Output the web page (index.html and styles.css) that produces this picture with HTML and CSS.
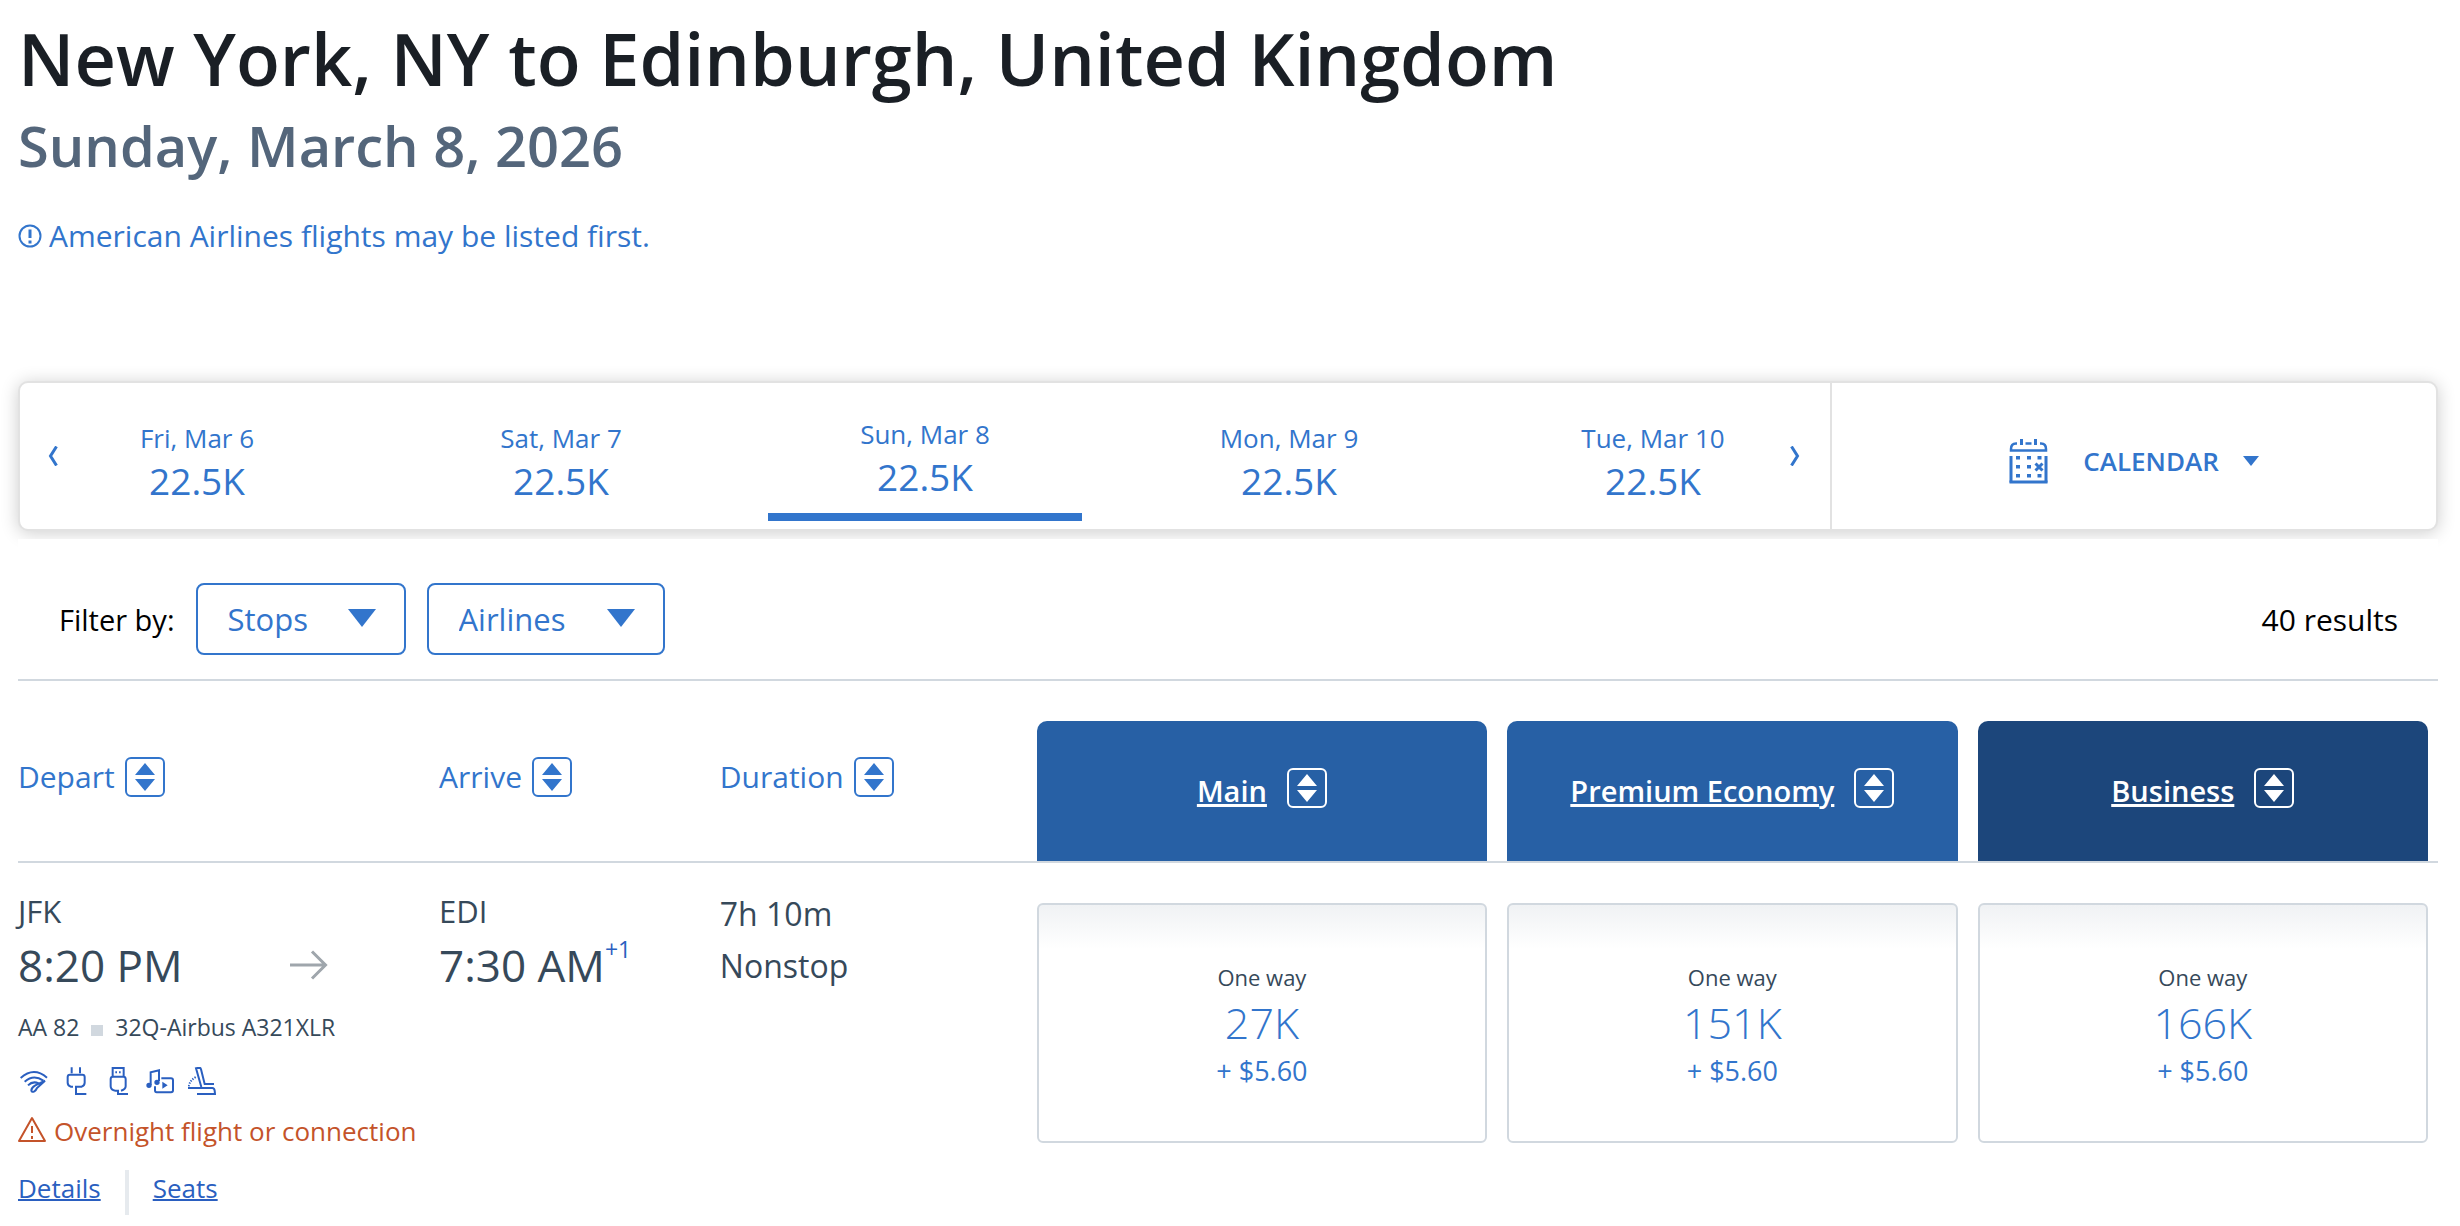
FILE: index.html
```html
<!DOCTYPE html>
<html lang="en">
<head>
    <meta charset="utf-8">
    <meta name="viewport" content="width=device-width, initial-scale=1">
    <title>Choose flights</title>
    <link rel="stylesheet" href="styles.css">
</head>
<body>
    <!-- shared icons -->
    <svg class="sprite" aria-hidden="true">
        <symbol id="icon-sort" viewBox="0 0 40 40">
            <rect x="1" y="1" width="38" height="38" rx="5" fill="none" stroke="currentColor" stroke-width="2"/>
            <path d="M20 6 30 18H10ZM20 34 30 22H10Z" fill="currentColor"/>
        </symbol>
    </svg>

    <header class="page-header">
        <h1>New York, NY to Edinburgh, United Kingdom</h1>
        <h2>Sunday, March 8, 2026</h2>
        <p class="notice">
            <svg width="24" height="24" viewBox="0 0 24 24" fill="none" stroke="currentColor" stroke-width="2" aria-hidden="true">
                <circle cx="12" cy="12" r="10.5"/>
                <path d="M12 5.500v8.500M12 16.500v3" stroke-width="3"/>
            </svg>
            American Airlines flights may be listed first.
        </p>
    </header>

    <nav class="date-bar" aria-label="Dates">
        <div class="days">
            <button class="arrow prev" aria-label="Previous dates">
                <svg width="10" height="20" viewBox="0 0 10 20" fill="none" stroke="currentColor" stroke-width="3"><path d="M8.500.5 2.500 10l6 9.500"/></svg>
            </button>
            <button class="day"><span class="date">Fri, Mar 6</span><span class="price">22.5K</span></button>
            <button class="day"><span class="date">Sat, Mar 7</span><span class="price">22.5K</span></button>
            <button class="day selected"><span class="date">Sun, Mar 8</span><span class="price">22.5K</span></button>
            <button class="day"><span class="date">Mon, Mar 9</span><span class="price">22.5K</span></button>
            <button class="day"><span class="date">Tue, Mar 10</span><span class="price">22.5K</span></button>
            <button class="arrow next" aria-label="Next dates">
                <svg width="10" height="20" viewBox="0 0 10 20" fill="none" stroke="currentColor" stroke-width="3"><path d="m1.500.5 6 9.500-6 9.500"/></svg>
            </button>
        </div>
        <button class="calendar">
            <svg width="40" height="46" viewBox="0 0 40 46" aria-hidden="true">
                <g fill="none" stroke="currentColor">
                    <path d="M8 5.500H7Q2 5.500 2 11v1.500h35V11q0-5.500-5-5.500h-1M16.500 5.500h6" stroke-width="2.500"/>
                    <path d="M12.500 1v6M26.500 1v6" stroke-width="3"/>
                    <path d="M2 18v26.500M37 18v26.500" stroke-width="3"/>
                    <path d="M.5 44h38" stroke-width="3"/>
                    <path d="m26.500 25.500 7 7M33.500 25.500l-7 7" stroke-width="3"/>
                </g>
                <path d="M7 18h4v3.500H7zM18 18h4v3.500h-4zM28.500 18h4v3.500h-4zM7 27h4v3.500H7zM18 27h4v3.500h-4zM7 36h4v3.500H7zM18 36h4v3.500h-4zM28.500 36h4v3.500h-4z" fill="currentColor"/>
            </svg>
            <span>CALENDAR</span>
            <svg class="caret" width="16" height="10" viewBox="0 0 16 10" aria-hidden="true"><path d="M0 0h16L8 10z" fill="currentColor"/></svg>
        </button>
    </nav>

    <section class="filters">
        <label for="stops">Filter by:</label>
        <div class="dropdown stops">
            <select id="stops"><option>Stops</option></select>
        </div>
        <div class="dropdown airlines">
            <select id="airlines" aria-label="Airlines"><option>Airlines</option></select>
        </div>
        <p class="count">40 results</p>
    </section>

    <table class="results">
        <colgroup>
            <col class="col-depart">
            <col class="col-arrive">
            <col>
            <col class="col-fare">
            <col class="col-fare">
            <col class="col-fare">
        </colgroup>
        <thead>
            <tr>
                <th><button class="sort">Depart <svg><use href="#icon-sort"/></svg></button></th>
                <th><button class="sort">Arrive <svg><use href="#icon-sort"/></svg></button></th>
                <th><button class="sort">Duration <svg><use href="#icon-sort"/></svg></button></th>
                <th class="fare"><div class="cabin"><a href="#">Main</a><button class="sort" aria-label="Sort by Main"><svg><use href="#icon-sort"/></svg></button></div></th>
                <th class="fare"><div class="cabin"><a href="#">Premium Economy</a><button class="sort" aria-label="Sort by Premium Economy"><svg><use href="#icon-sort"/></svg></button></div></th>
                <th class="fare"><div class="cabin business"><a href="#">Business</a><button class="sort" aria-label="Sort by Business"><svg><use href="#icon-sort"/></svg></button></div></th>
            </tr>
        </thead>
        <tbody>
            <tr>
                <td>
                    <div class="airport">JFK</div>
                    <div class="time-row">
                        <span class="time">8:20 PM</span>
                        <svg width="38" height="30" viewBox="0 0 38 30" fill="none" stroke="currentColor" stroke-width="3" aria-hidden="true"><path d="M0 15h35M22 1.500 35.500 15 22 28.500"/></svg>
                    </div>
                    <div class="flight">AA 82 <i></i> 32Q-Airbus A321XLR</div>
                    <div class="amenities">
                        <!-- wifi -->
                        <svg viewBox="60 50 84 84">
                            <path d="M62 83Q101 48 141 82M74 94q27-23 56-3M84 105q14-14 32-6"/>
                            <path d="M135 91 106 105q-12 7-12 15 1 7 9 3 5-3 8-10z"/>
                        </svg>
                        <!-- power outlet -->
                        <svg viewBox="186 50 84 84">
                            <path d="M215 51v18M240 51v18M219 109h-7q-9-4-9-12V80q0-7 7-7h37q7 0 7 7v17q0 8-9 12h-17v22h31"/>
                        </svg>
                        <!-- usb -->
                        <svg viewBox="312 50 84 84">
                            <path d="M338 78V53h33v25M346 66h5M357 66h5M363 121q14-4 14-13V86q0-7-7-7h-31q-7 0-7 7v22q0 12 14 13h8v10h30"/>
                        </svg>
                        <!-- entertainment -->
                        <svg viewBox="438 50 84 84">
                            <path d="M452 104V66l25-6v32M484 84h29q6 0 6 6v30q0 6-6 6h-43q-5 0-5-6v-12"/>
                            <path class="solid" d="M439 105a8 8 0 1 0 16 0 8 8 0 1 0-16 0M463 96a8 8 0 1 0 16 0 8 8 0 1 0-16 0M487 94v21l16-10z"/>
                        </svg>
                        <!-- lie flat seat -->
                        <svg viewBox="564 50 84 84">
                            <path d="M564 113h73q6 0 7 8l1 10h-54M604 110 588 54l9-2q5 0 6 5l11 44h28"/>
                            <path d="M566 108q4-20 24-29" stroke-dasharray="4 4"/>
                        </svg>
                    </div>
                    <div class="warning">
                        <svg width="28" height="27" viewBox="0 0 28 27" fill="none" stroke="currentColor" stroke-width="2" aria-hidden="true">
                            <path d="M14 2 27 25H1Z" stroke-linejoin="round"/>
                            <path d="M14 10v7M14 20v3"/>
                        </svg>
                        Overnight flight or connection
                    </div>
                    <div class="links">
                        <a href="#">Details</a>
                        <a href="#">Seats</a>
                    </div>
                </td>
                <td>
                    <div class="airport">EDI</div>
                    <div class="time-row"><span class="time">7:30 AM<sup>+1</sup></span></div>
                </td>
                <td>
                    <div class="duration">7h 10m<br>Nonstop</div>
                </td>
                <td class="fare"><button class="fare-card"><small>One way</small><strong>27K</strong><span>+ $5.60</span></button></td>
                <td class="fare"><button class="fare-card"><small>One way</small><strong>151K</strong><span>+ $5.60</span></button></td>
                <td class="fare"><button class="fare-card"><small>One way</small><strong>166K</strong><span>+ $5.60</span></button></td>
            </tr>
        </tbody>
    </table>
</body>
</html>
```

FILE: styles.css
```css
* { box-sizing: border-box; }

body {
    margin: 0;
    padding: 18px 22px 0 18px;
    background: #fff;
    color: #36495a;
    font-family: "Open Sans", sans-serif;
}
h1, h2, p { margin: 0; }
button, select {
    margin: 0;
    padding: 0;
    border: none;
    background: none;
    color: inherit;
    font: inherit;
    cursor: pointer;
}
.sprite { position: absolute; width: 0; height: 0; }

/* heading */
h1 { font-size: 72px; line-height: 80px; font-weight: 600; color: #1a1f25; }
h2 { margin-top: 7px; font-size: 56px; line-height: 80px; font-weight: 600; color: #54667b; }
.notice {
    display: flex;
    align-items: center;
    gap: 7px;
    margin-top: 31px;
    font-size: 30px;
    line-height: 40px;
    color: #3275cc;
}

/* dates */
.date-bar {
    display: flex;
    height: 150px;
    margin-top: 125px;
    border: 2px solid #e2e2e2;
    border-radius: 10px;
    background: #fff;
    box-shadow: 0 2px 18px rgba(0, 0, 0, 0.2);
    color: #3275cc;
}
.days {
    position: relative;
    display: flex;
    flex: 1;
    gap: 50px;
    padding: 0 20px;
    border-right: 2px solid #e2e2e2;
}
.day {
    display: flex;
    flex: 1;
    flex-direction: column;
    align-self: flex-end;
    align-items: center;
    padding-bottom: 21px;
}
.day.selected { margin-bottom: 8px; padding-bottom: 9px; border-bottom: 8px solid #3275cc; }
.date { font-size: 26px; line-height: 32px; }
.price { font-size: 37px; line-height: 54px; }
.arrow { position: absolute; top: 50%; display: flex; margin-top: -10px; }
.prev { left: 28px; }
.next { right: 30px; }
.calendar {
    display: flex;
    width: 25%;
    align-items: center;
    justify-content: center;
    padding-top: 9px;
    font-size: 26px;
    line-height: 32px;
    font-weight: 600;
}
.calendar span { margin: 0 24px 0 34px; }

/* filters */
.filters {
    position: relative;
    display: flex;
    align-items: center;
    gap: 21px;
    margin-top: 8px;
    padding: 44px 40px 24px 41px;
    border-bottom: 2px solid #d1d8df;
    background: #fff;
    color: #000;
    font-size: 30px;
}
.filters label { font-size: 29px; }
.dropdown { position: relative; color: #3275cc; }
.dropdown select {
    width: 100%;
    height: 72px;
    padding: 0 30px;
    border: 2px solid #3275cc;
    border-radius: 8px;
    font-size: 31px;
    appearance: none;
}
.dropdown::after {
    content: "";
    position: absolute;
    top: 26px;
    right: 30px;
    border: solid transparent;
    border-width: 18px 14px 0;
    border-top-color: #3275cc;
    pointer-events: none;
}
.stops { width: 210px; }
.airlines { width: 238px; }
.count { margin-left: auto; }

/* results */
.results {
    width: 100%;
    margin-top: 40px;
    border-collapse: collapse;
    table-layout: fixed;
}
.col-depart { width: 17.400%; }
.col-arrive { width: 11.600%; }
.col-fare { width: 19.440%; }
thead tr { border-bottom: 2px solid #d1d8df; }
th { height: 140px; padding: 0 0 28px; text-align: left; font-weight: 400; vertical-align: middle; }
td { padding: 28px 0 0; vertical-align: top; }
.sort {
    display: flex;
    align-items: center;
    gap: 10px;
    font-size: 30px;
    line-height: 40px;
    color: #3275cc;
}
.sort svg { width: 40px; height: 40px; }
.fare { padding: 0 10px; }
td.fare { padding-top: 40px; }
.cabin {
    display: flex;
    align-items: center;
    justify-content: center;
    gap: 20px;
    height: 140px;
    padding-bottom: 6px;
    border-radius: 10px 10px 0 0;
    background: #2760a5;
    color: #fff;
}
.cabin.business { background: #1c467b; }
.cabin a { padding-top: 5px; color: inherit; font-size: 29px; line-height: 40px; font-weight: 600; text-decoration-thickness: 3px; }
.cabin .sort { color: #fff; }

.airport { font-size: 31px; line-height: 40px; }
.time-row { display: flex; justify-content: space-between; align-items: center; padding-right: 111px; color: #9fa6ac; }
.time { color: #36495a; font-size: 44px; line-height: 68px; }
.time sup { font-size: 23px; line-height: 0; vertical-align: 24px; color: #2a5fc0; }
td + td .time-row { padding-right: 0; }
.flight { margin-top: 10px; font-size: 23px; line-height: 36px; }
.flight i { display: inline-block; width: 12px; height: 11px; margin: 0 6px; background: #d1d8df; }
.amenities { display: flex; gap: 14px; margin: 22px 0 18px; padding-left: 2px; color: #2a5fc0; }
.amenities svg { width: 28px; height: 28px; fill: none; stroke: currentColor; stroke-width: 6; }
.amenities .solid { fill: currentColor; stroke: none; }
.warning { display: flex; align-items: center; gap: 8px; color: #c4532a; font-size: 26px; line-height: 36px; }
.warning svg { margin-bottom: 4px; }
.links { display: flex; height: 45px; margin-top: 21px; font-size: 26px; line-height: 36px; }
.links a { color: #2a5fc0; text-decoration-thickness: 2px; }
.links a + a { margin-left: 24px; padding-left: 24px; border-left: 4px solid #e6eaee; }
.duration { margin-top: -3px; font-size: 32px; line-height: 52px; }

.fare-card {
    display: flex;
    flex-direction: column;
    align-items: center;
    width: 100%;
    height: 240px;
    padding-top: 56px;
    border: 2px solid #d1d8df;
    border-radius: 6px;
    background: linear-gradient(#f0f2f4, #fff 44px);
    color: #3275cc;
}
.fare-card small { color: #36495a; font-size: 22px; line-height: 32px; }
.fare-card strong { font-size: 43px; line-height: 60px; font-weight: 300; }
.fare-card span { font-size: 27px; line-height: 36px; }
```
